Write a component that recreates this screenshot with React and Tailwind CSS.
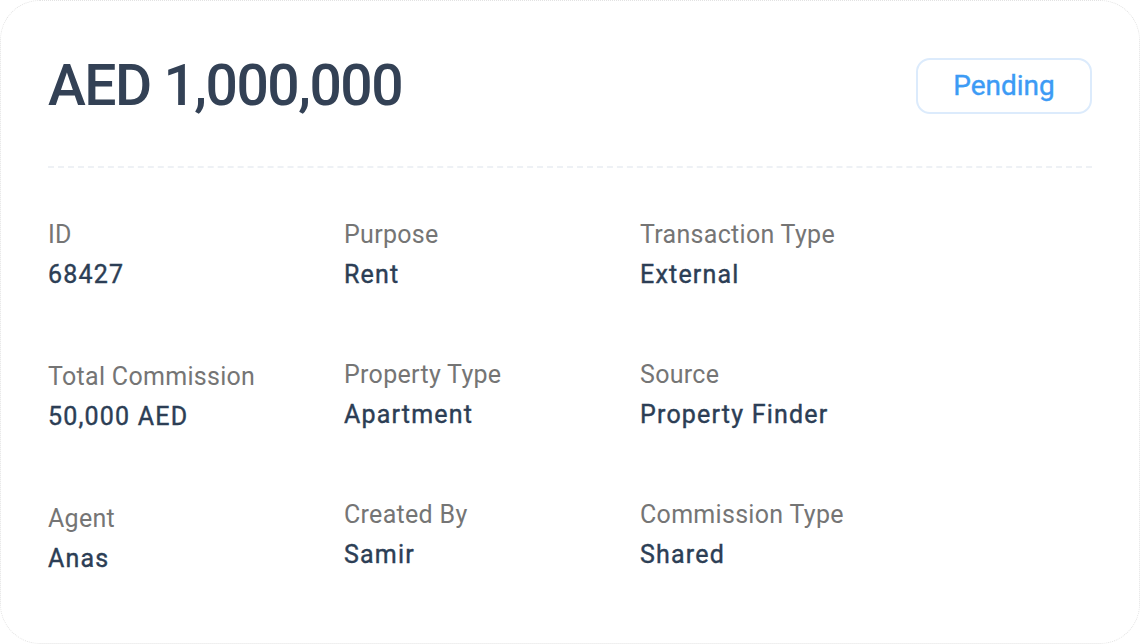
const fields = [
  [
    { label: "ID", value: "68427" },
    { label: "Total Commission", value: "50,000 AED" },
    { label: "Agent", value: "Anas" },
  ],
  [
    { label: "Purpose", value: "Rent" },
    { label: "Property Type", value: "Apartment" },
    { label: "Created By", value: "Samir" },
  ],
  [
    { label: "Transaction Type", value: "External" },
    { label: "Source", value: "Property Finder" },
    { label: "Commission Type", value: "Shared" },
  ],
];

function Field({ label, value }) {
  return (
    <div className="flex flex-col">
      <span className="text-[25px] leading-[40px] tracking-[0.3px] text-[#757575]">{label}</span>
      <span className="text-[25px] leading-[40px] tracking-[1.2px] text-[#2c3e55] [-webkit-text-stroke:0.4px_#2c3e55]">
        {value}
      </span>
    </div>
  );
}

export default function App() {
  return (
    <div
      className="h-[644px] w-[1140px] bg-white"
      style={{ fontFamily: "Roboto, 'Open Sans', sans-serif" }}
    >
      <div className="flex h-full flex-col rounded-[40px] border border-dotted border-[#e2e2e2] bg-white px-[47px]">
        <div className="flex items-center justify-between pt-[55px] pb-[50px]">
          <h1 className="text-[57px] font-medium leading-[60px] tracking-[-1.5px] text-[#334155]">
            AED 1,000,000
          </h1>
          <span className="flex h-[56px] w-[176px] items-center justify-center rounded-[14px] border-2 border-[#dcebfc] text-[28px] text-[#3d9bf5] [-webkit-text-stroke:0.4px_#3d9bf5]">
            Pending
          </span>
        </div>
        <div className="border-t-2 border-dashed border-[#eef1f5]" />
        <div className="grid grid-cols-[296px_296px_1fr] pt-[47px]">
          {fields.map((col, i) => (
            <div key={i} className={i === 0 ? "flex flex-col gap-[62px]" : "flex flex-col gap-[60px]"}>
              {col.map((f) => (
                <Field key={f.label} label={f.label} value={f.value} />
              ))}
            </div>
          ))}
        </div>
      </div>
    </div>
  );
}
